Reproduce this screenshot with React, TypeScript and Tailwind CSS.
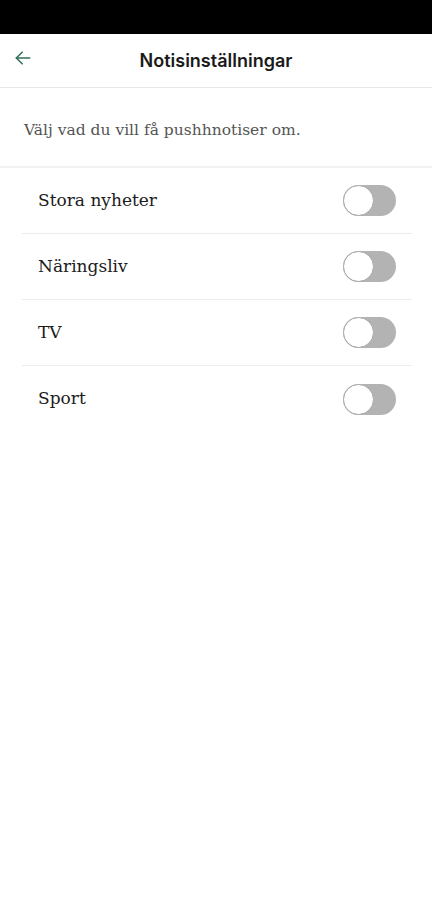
import React from "react";

const items = ["Stora nyheter", "Näringsliv", "TV", "Sport"];

function Toggle() {
  return (
    <div className="w-[53px] h-[31px] rounded-full bg-[#b3b3b3] relative">
      <div className="absolute left-0 top-0 w-[31px] h-[31px] rounded-full bg-white border-[1.5px] border-[#a8a8a8]" />
    </div>
  );
}

export default function App() {
  return (
    <div className="w-[432px] h-[900px] bg-white flex flex-col">
      <div className="h-[34px] bg-black" />
      <div className="h-[54px] flex items-center relative border-b border-[#e8e8e8]">
        <div className="absolute left-[13px] top-[14px]">
          <svg width="20" height="20" viewBox="0 0 24 24" fill="none" stroke="#2f6f5c" strokeWidth="1.8" strokeLinecap="round" strokeLinejoin="round">
            <path d="M20 12H4" />
            <path d="M11 5l-7 7 7 7" />
          </svg>
        </div>
        <div className="flex-1 text-center text-[18px] font-semibold text-[#1a1a1a] pb-[1px]" style={{ fontFamily: "Inter, 'Noto Sans', sans-serif" }}>
          Notisinställningar
        </div>
      </div>
      <div className="h-[80px] flex items-center px-[24px] border-b-2 border-[#f2f2f2] pt-[8px]">
        <span className="text-[15.5px] text-[#555555]" style={{ fontFamily: "'DejaVu Serif', serif" }}>
          Välj vad du vill få pushhnotiser om.
        </span>
      </div>
      <div className="pl-[22px] pr-[20px] flex flex-col">
        {items.map((it, i) => (
          <div key={it} className={"h-[66px] flex items-center justify-between pl-[16px] pr-[16px] " + (i < items.length - 1 ? "border-b border-[#ececec]" : "")}>
            <span className="text-[17px] text-[#1c1c1c]" style={{ fontFamily: "'DejaVu Serif', serif" }}>
              {it}
            </span>
            <Toggle />
          </div>
        ))}
      </div>
    </div>
  );
}
